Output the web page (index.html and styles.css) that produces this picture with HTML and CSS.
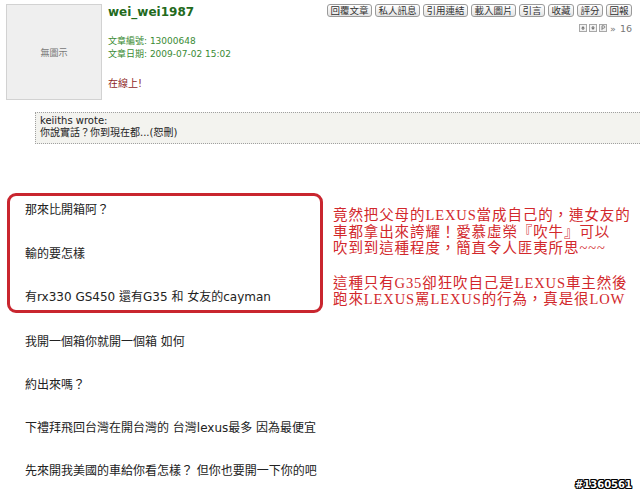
FILE: index.html
```html
<!DOCTYPE html>
<html lang="zh-Hant">
<head>
<meta charset="utf-8">
<title>wei_wei1987</title>
<link rel="stylesheet" href="styles.css">
</head>
<body>
<div class="page">
  <header class="post-head">
    <div class="avatar">無圖示</div>
    <div class="info">
      <div class="name">wei_wei1987</div>
      <div class="meta">文章編號: 13000648<br>文章日期: 2009-07-02 15:02</div>
      <div class="online">在線上!</div>
    </div>
    <div class="tools">
      <div class="btns">
        <span class="btn wide">回覆文章</span>
        <span class="btn wide">私人訊息</span>
        <span class="btn wide">引用連結</span>
        <span class="btn wide">載入圖片</span>
        <span class="btn">引言</span>
        <span class="btn">收藏</span>
        <span class="btn">評分</span>
        <span class="btn">回報</span>
      </div>
      <div class="nav">
        <svg class="ico" viewBox="0 0 8 8"><rect x="0.5" y="0.5" width="7" height="7" fill="#f2f2f2" stroke="#a8a8a8"/><path d="M4 2 L2 4.5 H3.4 V6 H4.6 V4.5 H6 Z" fill="#777"/></svg>
        <svg class="ico" viewBox="0 0 8 8"><rect x="0.5" y="0.5" width="7" height="7" fill="#f2f2f2" stroke="#a8a8a8"/><path d="M4 6 L2 3.5 H3.4 V2 H4.6 V3.5 H6 Z" fill="#777"/></svg>
        <svg class="ico" viewBox="0 0 8 8"><rect x="0.5" y="0.5" width="7" height="7" fill="#f2f2f2" stroke="#a8a8a8"/><path d="M3 6.2 V1.8 H4.8 C6.2 1.8 6.2 4.2 4.8 4.2 H3" fill="none" stroke="#777" stroke-width="0.9"/></svg>
        <span class="raq">»</span><span class="num">16</span>
      </div>
    </div>
  </header>

  <div class="quote">
    <div>keiiths wrote:</div>
    <div>你說實話？你到現在都...(恕刪)</div>
  </div>

  <div class="content">
    <div class="marked">
      <div class="redbox">
        <p>那來比開箱阿？</p>
        <p>輸的要怎樣</p>
        <p>有rx330 GS450 還有G35 和 女友的cayman</p>
      </div>
      <div class="note">
        <p>竟然把父母的LEXUS當成自己的，連女友的<br>車都拿出來誇耀！愛慕虛榮『吹牛』可以<br>吹到到這種程度，簡直令人匪夷所思~~~</p>
        <p>這種只有G35卻狂吹自己是LEXUS車主然後<br>跑來LEXUS罵LEXUS的行為，真是很LOW</p>
      </div>
    </div>
    <div class="rest">
      <p>我開一個箱你就開一個箱 如何</p>
      <p>約出來嗎？</p>
      <p>下禮拜飛回台灣在開台灣的 台灣lexus最多 因為最便宜</p>
      <p>先來開我美國的車給你看怎樣？ 但你也要開一下你的吧</p>
    </div>
  </div>

  <div class="watermark">#1360561</div>
</div>
</body>
</html>
```

FILE: styles.css
```css
* { box-sizing: border-box; }

html, body {
  margin: 0;
  padding: 0;
  background: #ffffff;
}

body {
  font-family: "DejaVu Sans", "Noto Sans CJK TC", sans-serif;
  color: #222;
}

.page {
  position: relative;
  width: 640px;
  height: 495px;
  overflow: hidden;
  padding-top: 4px;
}

p { margin: 0; }

/* ---------- header ---------- */
.post-head {
  display: flex;
  align-items: flex-start;
  height: 96px;
}

.avatar {
  width: 96px;
  height: 96px;
  margin-left: 6px;
  background: #efefef;
  border: 1px solid #d2d2d2;
  display: flex;
  align-items: center;
  justify-content: center;
  font-size: 9px;
  color: #777;
}

.info {
  margin-left: 6px;
}

.name {
  font-size: 12px;
  line-height: 16px;
  font-weight: bold;
  color: #236a1c;
}

.meta {
  margin-top: 14.5px;
  font-size: 9px;
  line-height: 13px;
  color: #3a8a34;
}

.online {
  margin-top: 16px;
  font-size: 10px;
  line-height: 13px;
  color: #8e1f1f;
}

.tools {
  margin-left: auto;
  margin-right: 8px;
  display: flex;
  flex-direction: column;
  align-items: flex-end;
}

.btns {
  display: flex;
  gap: 3px;
}

.btn {
  display: block;
  width: 26px;
  height: 13px;
  border: 1px solid #9a9a9a;
  border-radius: 3px;
  background: linear-gradient(#ffffff, #e4e4e4);
  font-size: 9.5px;
  line-height: 11px;
  text-align: center;
  color: #333;
  white-space: nowrap;
}

.btn.wide { width: 45px; }

.nav {
  margin-top: 6px;
  display: flex;
  align-items: center;
  height: 10px;
  font-size: 9.5px;
  color: #777;
}

.ico {
  width: 8px;
  height: 8px;
  margin-right: 2px;
  display: block;
}

.raq { margin-left: 1px; margin-right: 4px; }

/* ---------- quote ---------- */
.quote {
  margin-top: 12px;
  margin-left: 35px;
  margin-right: -4px;
  height: 32px;
  border: 1px dotted #a0a0a0;
  background: #f3f3ef;
  padding: 2px 4px 4px;
  font-size: 10px;
  line-height: 12px;
  color: #222;
}

/* ---------- content ---------- */
.content {
  margin-top: 49px;
  font-size: 12px;
  line-height: 16px;
  color: #222;
}

.marked {
  display: flex;
  align-items: flex-start;
}

.redbox {
  width: 316px;
  margin-left: 7px;
  border: 3px solid #c9262f;
  border-radius: 9px;
  padding: 6px 0 5px 15px;
  display: flex;
  flex-direction: column;
  gap: 27.5px;
  white-space: nowrap;
}

.note {
  margin-left: 10px;
  margin-top: 14px;
  font-family: "Liberation Serif", "Noto Sans CJK TC", serif;
  font-size: 14.5px;
  line-height: 16.5px;
  letter-spacing: 0.9px;
  color: #d2282c;
  white-space: nowrap;
  display: flex;
  flex-direction: column;
  gap: 18px;
}

.rest {
  margin-top: 21px;
  padding-left: 25px;
  display: flex;
  flex-direction: column;
  gap: 27px;
  white-space: nowrap;
}

/* ---------- watermark ---------- */
.watermark {
  position: absolute;
  right: 8px;
  bottom: 4px;
  font-size: 10px;
  line-height: 12px;
  font-weight: bold;
  color: #ffffff;
  text-shadow:
    1px 0 0 #000, -1px 0 0 #000, 0 1px 0 #000, 0 -1px 0 #000,
    1px 1px 0 #000, -1px -1px 0 #000, 1px -1px 0 #000, -1px 1px 0 #000;
}
```
